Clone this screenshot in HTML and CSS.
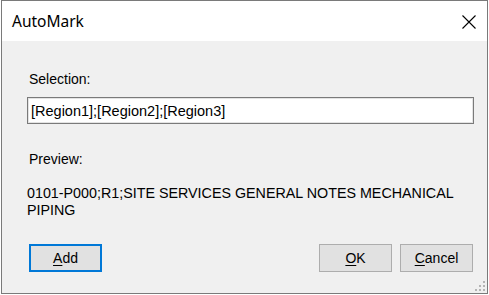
FILE: index.html
```html
<!DOCTYPE html>
<html lang="en">
<head>
    <meta charset="UTF-8">
    <title>AutoMark</title>
    <link rel="stylesheet" href="styles.css">
</head>
<body>
    <div class="window">
        <div class="titlebar">
            <span class="title">AutoMark</span>
            <svg class="close" width="14" height="14" viewBox="0 0 14 14">
                <path d="M0.5 0.5 L13.5 13.5 M13.5 0.5 L0.5 13.5" stroke="#000" stroke-width="1.1" fill="none"/>
            </svg>
        </div>
        <div class="client">
            <div class="label">Selection:</div>
            <input class="field" type="text" value="[Region1];[Region2];[Region3]">
            <div class="label preview-label">Preview:</div>
            <div class="preview">0101-P000;R1;SITE SERVICES GENERAL NOTES MECHANICAL PIPING</div>
            <div class="buttons">
                <button class="btn default"><u>A</u>dd</button>
                <div class="right">
                    <button class="btn"><u>O</u>K</button>
                    <button class="btn"><u>C</u>ancel</button>
                </div>
            </div>
            <svg class="grip" width="10" height="10" viewBox="0 0 10 10">
                <rect x="8" y="0" width="2" height="2" fill="#b4b4b4"/>
                <rect x="4" y="4" width="2" height="2" fill="#b4b4b4"/>
                <rect x="8" y="4" width="2" height="2" fill="#b4b4b4"/>
                <rect x="0" y="8" width="2" height="2" fill="#b4b4b4"/>
                <rect x="4" y="8" width="2" height="2" fill="#b4b4b4"/>
                <rect x="8" y="8" width="2" height="2" fill="#b4b4b4"/>
            </svg>
        </div>
    </div>
</body>
</html>
```

FILE: styles.css
```css
body {
    margin: 0;
    background: #ffffff;
    font-family: "Liberation Sans", Arial, sans-serif;
}
.window {
    box-sizing: border-box;
    margin-left: 1px;
    width: 487px;
    height: 294px;
    border: 1px solid #7a7a7a;
    display: flex;
    flex-direction: column;
    background: #f0f0f0;
}
.titlebar {
    height: 40px;
    flex: none;
    background: #ffffff;
    display: flex;
    align-items: center;
    justify-content: space-between;
    padding: 0 11px 0 10px;
}
.title {
    font-family: "Segoe UI", "Noto Sans", sans-serif;
    font-size: 15.5px;
    color: #000;
}
.close {
    display: block;
    margin-top: 1px;
}
.client {
    position: relative;
    flex: 1;
    padding: 30px 12px 0 25px;
    font-size: 14px;
    line-height: 17px;
    color: #000;
}
.label {
    margin-left: 2px;
}
.field {
    display: block;
    box-sizing: border-box;
    width: 447px;
    height: 27px;
    margin: 9px 0 0 0;
    padding: 0 3px;
    border: 1px solid #7a7a7a;
    box-shadow: inset 0 0 0 1px #e3e3e3;
    background: #fff;
    font-family: "Liberation Sans", Arial, sans-serif;
    font-size: 14.5px;
    color: #000;
    outline: none;
}
.preview-label {
    margin-top: 27px;
}
.preview {
    margin-top: 17px;
    width: 447px;
    font-size: 14.3px;
}
.buttons {
    display: flex;
    justify-content: space-between;
    margin: 25px 2px 0 2px;
}
.right {
    display: flex;
    gap: 8px;
}
.btn {
    box-sizing: border-box;
    width: 73px;
    height: 28px;
    padding: 0;
    border: 1px solid #adadad;
    background: #e1e1e1;
    font-family: "Liberation Sans", Arial, sans-serif;
    font-size: 14px;
    color: #000;
}
.btn u {
    text-underline-offset: 2px;
}
.default {
    border: 2px solid #0078d7;
}
.grip {
    position: absolute;
    right: 2px;
    bottom: 2px;
}
```
